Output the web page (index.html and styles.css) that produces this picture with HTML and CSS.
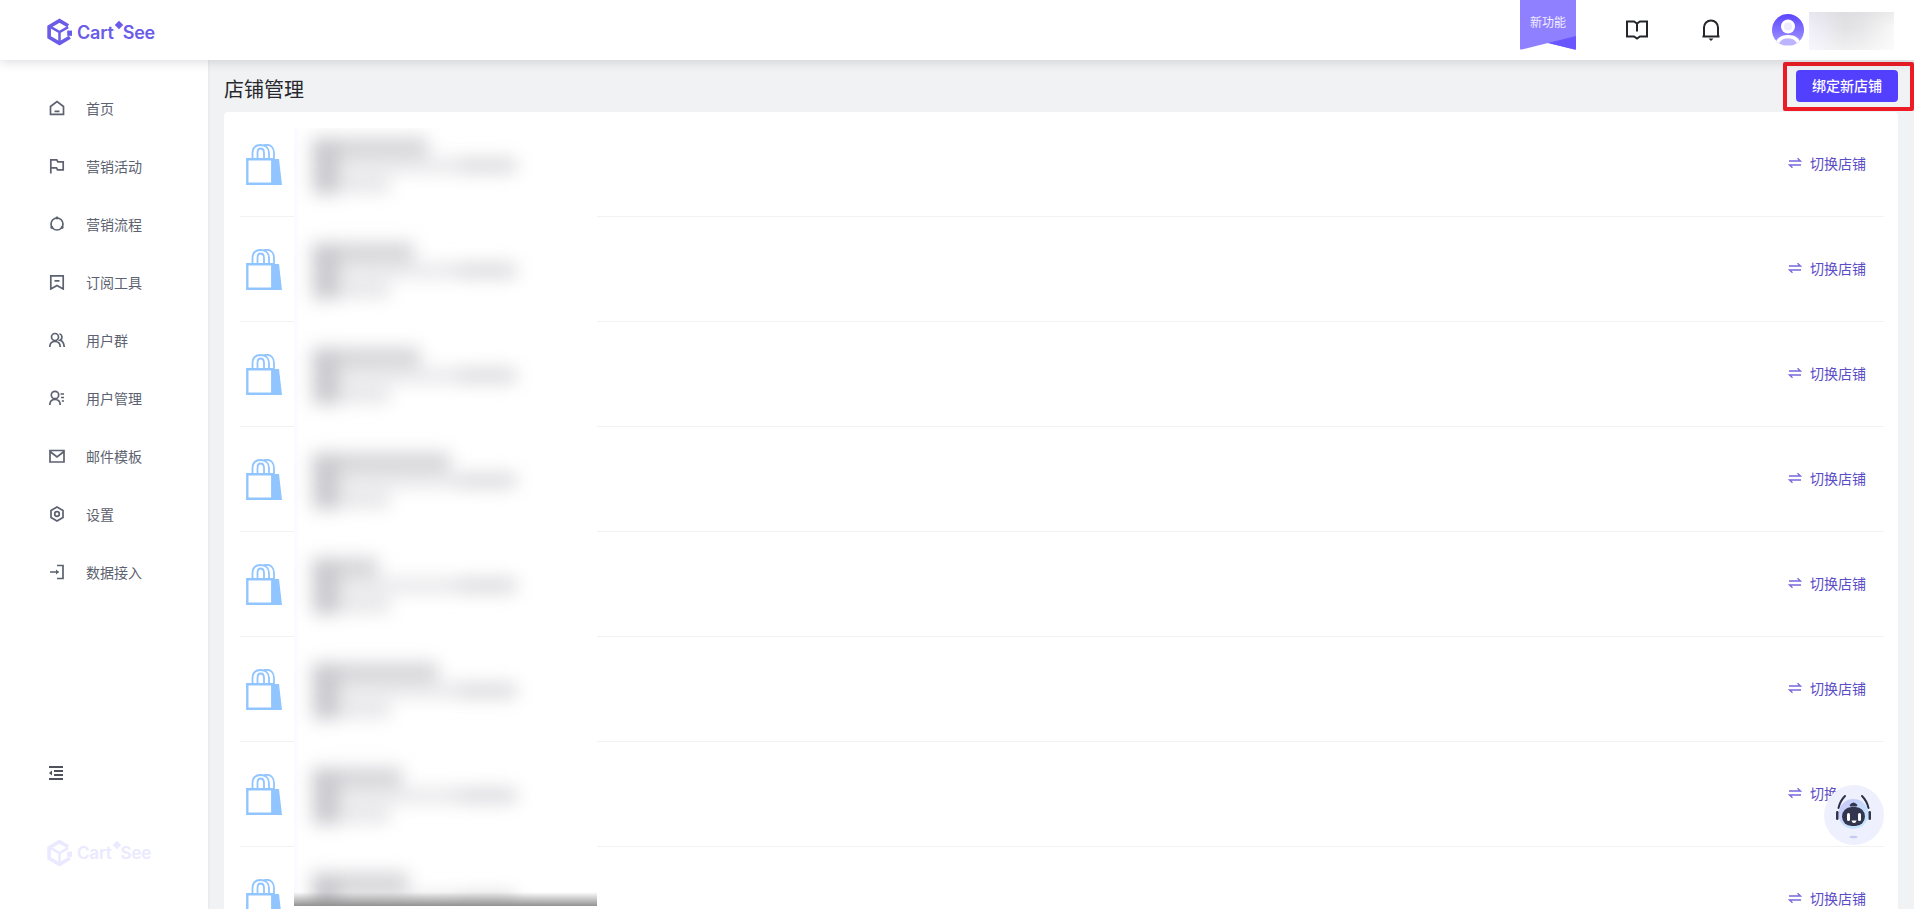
FILE: index.html
```html
<!DOCTYPE html>
<html lang="zh-CN">
<head>
<meta charset="utf-8">
<title>店铺管理</title>
<link rel="stylesheet" href="styles.css">
</head>
<body>
<svg class="defs" width="0" height="0" aria-hidden="true">
  <defs>
    <symbol id="bag" viewBox="0 0 36 41">
      <path d="M26 15h7l3 26H26z" fill="#91c5ff"/>
      <path d="M1.300 15.300h25v24.400h-25z" fill="#fff" stroke="#91c5ff" stroke-width="2.400"/>
      <path d="M6.500 15V9C6.500 4 9.500 1 14.500 1S23 4 23 9v6M11.500 15V9c0-3 1-4.500 3-4.500S18 6 18 9v6" fill="none" stroke="#91c5ff" stroke-width="1.800"/>
      <path d="M18 1.200C19 .8 20 .8 21 .8c4 0 7 3.200 7 8.200v6h-2" fill="none" stroke="#91c5ff" stroke-width="1.800"/>
    </symbol>
    <symbol id="swap" viewBox="0 0 14 12">
      <path d="M1 4h11.500L9.500 1.200M13 8H1.500l3 2.800" fill="none" stroke="#7668dc" stroke-width="1.300"/>
    </symbol>
    <symbol id="logo" viewBox="0 0 26 28">
      <path d="M22 7.500 13 2.200 2.200 8.500v11L13 25.800l10.800-6.300" fill="none" stroke="currentColor" stroke-width="3.800"/>
      <path d="M3 8.500 13 14l9-5M13 14v11" fill="none" stroke="currentColor" stroke-width="2.600"/>
      <path d="M21 12.500h5V18h-5z" fill="currentColor"/>
    </symbol>
  </defs>
</svg>

<header class="topbar">
  <a class="brand brand-top">
    <svg class="brand-mark"><use href="#logo"/></svg>
    <span class="brand-text">Cart<i class="spark"></i>See</span>
  </a>
  <div class="top-actions">
    <div class="ribbon">
      <svg class="ribbon-bg" viewBox="0 0 56 50" aria-hidden="true">
        <path d="M0 0h56v48.500q0 1.500-1.500 1L28 43 1.500 49.500Q0 50 0 48.500z" fill="#8f80ff"/>
        <path d="M28 43 56 36v12.500q0 1.500-1.500 1z" fill="#6a56ff"/>
      </svg>
      <span class="ribbon-text">新功能</span>
    </div>
    <svg class="top-icon book" viewBox="0 0 22 20" aria-hidden="true">
      <path d="M1 1.500h7l3 2 3-2h7v15h-7l-3 2-3-2H1z" fill="none" stroke="#24262b" stroke-width="2"/>
      <path d="M11 3.500v8" stroke="#24262b" stroke-width="2"/>
    </svg>
    <svg class="top-icon bell" viewBox="0 0 18 22" aria-hidden="true">
      <path d="M.5 17.500h17M2 17.500V8.500a7 7 0 0 1 14 0v9" fill="none" stroke="#24262b" stroke-width="2"/>
      <path d="M6.500 19.500h5L9 22z" fill="#24262b"/>
    </svg>
    <svg class="avatar" viewBox="0 0 32 32" aria-hidden="true">
      <defs>
        <linearGradient id="av" x1="0" y1="0" x2="0" y2="1"><stop offset="0" stop-color="#5a45ff"/><stop offset="1" stop-color="#a89cff"/></linearGradient>
        <clipPath id="avc"><circle cx="16" cy="16" r="16"/></clipPath>
      </defs>
      <circle cx="16" cy="16" r="16" fill="url(#av)"/>
      <g clip-path="url(#avc)" fill="#fff">
        <circle cx="16" cy="12.500" r="7"/>
        <path d="M3 31c1-7 6-10 13-10s12 3 13 10v2H3z"/>
      </g>
      <circle cx="16" cy="12.500" r="4" fill="#eeeaff"/>
      <path d="M7 30c1-3.500 4-5.500 9-5.500s8 2 9 5.500q-4 1.500-9 1.500T7 30z" fill="#bdb4ff" clip-path="url(#avc)"/>
    </svg>
    <div class="user-name"></div>
  </div>
</header>

<div class="layout">
  <aside class="sidebar">
    <nav class="menu">
      <a class="menu-item"><svg class="menu-icon" viewBox="0 0 16 16"><path d="M1.500 14.300V6.500L8 1.500l6.500 5v7.800zM5.500 11.300h5"/></svg>首页</a>
      <a class="menu-item"><svg class="menu-icon" viewBox="0 0 16 16"><path d="M1.800 15.500V1.800h6l1 2h5.400v8H8.500l-1-2H1.800"/></svg>营销活动</a>
      <a class="menu-item"><svg class="menu-icon" viewBox="0 0 16 16"><circle cx="8" cy="8" r="6"/><circle cx="8" cy="2" r="1.400" class="dot"/><circle cx="2.800" cy="11.500" r="1.400" class="dot"/><circle cx="13.200" cy="11.500" r="1.400" class="dot"/></svg>营销流程</a>
      <a class="menu-item"><svg class="menu-icon" viewBox="0 0 16 16"><path d="M1.800 15V1.800h12.400V15L8 11.500zM5.500 6.800h5"/></svg>订阅工具</a>
      <a class="menu-item"><svg class="menu-icon" viewBox="0 0 16 16"><circle cx="6" cy="5" r="3.500"/><path d="M.8 15c0-3.500 2.200-5.500 5.200-5.500s5.200 2 5.200 5.500M10.500 1.800a3.500 3.500 0 0 1 .5 6.500c2.500.7 4 3 4.200 6.700"/></svg>用户群</a>
      <a class="menu-item"><svg class="menu-icon" viewBox="0 0 16 16"><circle cx="6" cy="5" r="3.700"/><path d="M.8 15c0-3.500 2.200-5.500 5.200-5.500s5.200 2 5.200 5.500M11.500 4h3.500M12 7.500h3M12.800 11H15"/></svg>用户管理</a>
      <a class="menu-item"><svg class="menu-icon" viewBox="0 0 16 16"><path d="M1 2.500h14v11.500H1zM1 3.500 8 9l7-5.500"/></svg>邮件模板</a>
      <a class="menu-item"><svg class="menu-icon" viewBox="0 0 16 16"><path d="M8 1l6 3.500v7L8 15l-6-3.500v-7z"/><circle cx="8" cy="8" r="2.300"/></svg>设置</a>
      <a class="menu-item"><svg class="menu-icon" viewBox="0 0 16 16"><path d="M8 1.500h6v13H8M1 8h8.500"/><path d="M7 5.500 10 8l-3 2.500z" class="dot"/></svg>数据接入</a>
    </nav>
    <div class="side-foot">
      <svg class="collapse" viewBox="0 0 14 14" aria-hidden="true">
        <path d="M0 1h14M5 5h9M5 9h9M0 13h14" stroke="#4f525b" stroke-width="2"/>
        <path d="M3 4.500v5L0 7z" fill="#4f525b"/>
      </svg>
      <a class="brand brand-faded">
        <svg class="brand-mark"><use href="#logo"/></svg>
        <span class="brand-text">Cart<i class="spark"></i>See</span>
      </a>
    </div>
  </aside>

  <main class="main">
    <div class="page-head">
      <h1 class="page-title">店铺管理</h1>
      <div class="bind-wrap"><button class="bind-btn">绑定新店铺</button></div>
    </div>
    <section class="card">
      <div class="shop-row"><svg class="shop-bag"><use href="#bag"/></svg><a class="switch"><svg class="switch-icon"><use href="#swap"/></svg>切换店铺</a></div>
      <div class="shop-row"><svg class="shop-bag"><use href="#bag"/></svg><a class="switch"><svg class="switch-icon"><use href="#swap"/></svg>切换店铺</a></div>
      <div class="shop-row"><svg class="shop-bag"><use href="#bag"/></svg><a class="switch"><svg class="switch-icon"><use href="#swap"/></svg>切换店铺</a></div>
      <div class="shop-row"><svg class="shop-bag"><use href="#bag"/></svg><a class="switch"><svg class="switch-icon"><use href="#swap"/></svg>切换店铺</a></div>
      <div class="shop-row"><svg class="shop-bag"><use href="#bag"/></svg><a class="switch"><svg class="switch-icon"><use href="#swap"/></svg>切换店铺</a></div>
      <div class="shop-row"><svg class="shop-bag"><use href="#bag"/></svg><a class="switch"><svg class="switch-icon"><use href="#swap"/></svg>切换店铺</a></div>
      <div class="shop-row"><svg class="shop-bag"><use href="#bag"/></svg><a class="switch"><svg class="switch-icon"><use href="#swap"/></svg>切换店铺</a></div>
      <div class="shop-row"><svg class="shop-bag"><use href="#bag"/></svg><a class="switch"><svg class="switch-icon"><use href="#swap"/></svg>切换店铺</a></div>
      <div class="redaction" aria-hidden="true">
        <div class="smear s1"><b></b><u></u><s></s></div>
        <div class="smear s2"><b></b><u></u><s></s></div>
        <div class="smear s3"><b></b><u></u><s></s></div>
        <div class="smear s4"><b></b><u></u><s></s></div>
        <div class="smear s5"><b></b><u></u><s></s></div>
        <div class="smear s6"><b></b><u></u><s></s></div>
        <div class="smear s7"><b></b><u></u><s></s></div>
        <div class="smear s8"><b></b><u></u><s></s></div>
      </div>
    </section>
  </main>
</div>

<div class="bot">
  <svg viewBox="0 0 60 60" aria-hidden="true">
    <defs>
      <linearGradient id="head" x1="0" y1="0" x2="1" y2="1"><stop offset="0" stop-color="#c9c6f7"/><stop offset="1" stop-color="#c4ecff"/></linearGradient>
    </defs>
    <circle cx="30" cy="30" r="30" fill="#eef1fd"/>
    <path d="M14.500 23q1.500-7 6.500-12M44.500 23q-1.500-7-6.500-12" fill="none" stroke="#2c2f45" stroke-width="2" stroke-linecap="round"/>
    <circle cx="29.500" cy="29" r="15" fill="url(#head)"/>
    <path d="M25.500 20q4-5 8 0l-1 1.500h-6z" fill="#34364f"/>
    <rect x="18" y="22" width="23" height="19" rx="9.500" fill="#34364f"/>
    <rect x="12" y="26" width="2.500" height="9" rx="1.200" fill="#34364f"/>
    <rect x="44.500" y="26" width="2.500" height="9" rx="1.200" fill="#34364f"/>
    <rect x="23" y="28" width="3" height="8" rx="1.500" fill="#fff"/>
    <rect x="34" y="28" width="3" height="8" rx="1.500" fill="#fff"/>
    <path d="M27.500 35.500h5q-.5 2.500-2.500 2.500t-2.500-2.500z" fill="#fff"/>
    <ellipse cx="29.500" cy="52" rx="4" ry="1.200" fill="#c5caf0"/>
  </svg>
</div>
</body>
</html>
```
FILE: styles.css
```css
* { box-sizing: border-box; }

html, body { height: 100%; }

body {
  margin: 0;
  overflow: hidden;
  display: flex;
  flex-direction: column;
  background: #f1f2f4;
  color: #222;
  font-family: "Noto Sans CJK SC", "Noto Sans", sans-serif;
  font-size: 14px;
}

.defs { position: absolute; }

/* top bar */
.topbar {
  position: relative;
  z-index: 2;
  flex: 0 0 60px;
  display: flex;
  align-items: center;
  justify-content: space-between;
  padding: 0 20px 0 47px;
  background: #fff;
  box-shadow: 0 2px 10px rgba(40, 44, 60, .16);
}

.brand {
  display: flex;
  align-items: center;
  gap: 5px;
  color: #6a5ce8;
}

.brand-top { margin-top: 4px; }
.brand-top .brand-text { padding-top: 2px; }

.brand-mark { width: 25px; height: 28px; }

.brand-text {
  display: block;
  font-family: Inter, "Noto Sans", sans-serif;
  font-size: 18px;
  font-weight: 600;
  line-height: 28px;
  letter-spacing: -.2px;
}

.spark {
  display: inline-block;
  width: 6px;
  height: 6px;
  margin: 0 1px 11px 2px;
  background: currentColor;
  transform: rotate(45deg);
}

.top-actions {
  display: flex;
  align-items: center;
  height: 60px;
}

.ribbon {
  position: relative;
  align-self: flex-start;
  width: 56px;
  height: 50px;
  margin-right: 50px;
}

.ribbon-bg { display: block; width: 56px; height: 50px; }

.ribbon-text {
  position: absolute;
  left: 0;
  right: 0;
  top: 13px;
  text-align: center;
  color: #f1eeff;
  font-size: 12px;
  line-height: 18px;
}

.top-icon { display: block; }
.book { width: 22px; height: 20px; margin-right: 54px; }
.bell { width: 18px; height: 22px; margin-right: 52px; }
.avatar { width: 32px; height: 32px; margin-right: 5px; }

.user-name {
  width: 85px;
  height: 38px;
  margin-top: 2px;
  background:
    linear-gradient(rgba(214, 214, 216, .35), rgba(255, 255, 255, 0) 40%, rgba(255, 255, 255, .5)),
    linear-gradient(90deg, #f0effb, #e2e2e4 42%, #e6e6e8 62%, #f8f8f8);
}

/* layout */
.layout {
  flex: 1;
  display: flex;
  min-height: 0;
}

.sidebar {
  flex: 0 0 208px;
  display: flex;
  flex-direction: column;
  padding-top: 19px;
  background: #fff;
  box-shadow: 1px 0 2px rgba(40, 44, 60, .05);
}

.menu-item {
  display: flex;
  align-items: center;
  gap: 21px;
  height: 58px;
  padding-left: 49px;
  color: #5c6270;
  font-size: 14px;
}

.menu-icon {
  flex: none;
  width: 16px;
  height: 16px;
  fill: none;
  stroke: #5c6270;
  stroke-width: 1.700;
}

.menu-icon .dot { fill: #5c6270; stroke: none; }

.side-foot {
  margin-top: auto;
  display: flex;
  flex-direction: column;
  padding: 0 0 42px 49px;
}

.collapse { display: block; width: 14px; height: 14px; margin-bottom: 59px; }

.brand-faded { margin-left: -2px; color: #ebe9ff; }
.brand-faded .brand-text { font-size: 17px; }

/* main */
.main {
  flex: 1;
  min-width: 0;
  display: flex;
  flex-direction: column;
  padding: 0 16px;
}

.page-head {
  flex: 0 0 52px;
  display: flex;
  align-items: center;
  justify-content: space-between;
}

.page-title {
  margin: 6px 0 0;
  font-size: 20px;
  font-weight: 400;
  line-height: 28px;
  color: #26282d;
}

.bind-wrap { position: relative; }

.bind-wrap::after {
  content: "";
  position: absolute;
  inset: -8px -16px -9px -13px;
  border: 4px solid #ed1c24;
  border-radius: 2px;
  pointer-events: none;
}

.bind-btn {
  display: block;
  width: 102px;
  height: 32px;
  padding: 0 0 2px;
  border: 0;
  border-radius: 4px;
  background: #5340ff;
  color: #fff;
  font: 500 14px "Noto Sans CJK SC", sans-serif;
}

.card {
  position: relative;
  flex: 1;
  min-height: 0;
  overflow: hidden;
  padding: 0 14px 0 16px;
  border-radius: 4px 4px 0 0;
  background: #fff;
}

.shop-row {
  display: flex;
  align-items: center;
  justify-content: space-between;
  height: 105px;
  padding: 0 18px 0 6px;
  border-bottom: 1px solid #f1f2f4;
}

.shop-bag { display: block; width: 36px; height: 41px; flex: none; }

.switch {
  display: flex;
  align-items: center;
  gap: 8px;
  padding-bottom: 2px;
  color: #5a4dc6;
  font-size: 14px;
  line-height: 20px;
}

.switch-icon { width: 14px; height: 12px; }

/* blurred-out shop details */
.redaction {
  position: absolute;
  left: 70px;
  top: 16px;
  width: 303px;
  height: 778px;
  overflow: hidden;
  background: linear-gradient(90deg, #fafbff, #fff 6px);
  display: flex;
  flex-direction: column;
}

.redaction::after {
  content: "";
  position: absolute;
  left: 0;
  right: 0;
  bottom: 0;
  height: 14px;
  background: linear-gradient(rgba(130, 130, 130, 0), #929292);
}

.smear {
  position: relative;
  flex: 0 0 105px;
  display: flex;
  flex-direction: column;
  padding: 10px 0 0 18px;
  filter: blur(9px);
}

.smear::before {
  content: "";
  position: absolute;
  left: 20px;
  top: 12px;
  width: 24px;
  height: 54px;
  background: #c8c8cd;
}

.smear b, .smear u, .smear s { display: block; }
.smear b { height: 18px; width: var(--w); background: #d2d2d6; }
.smear u {
  height: 13px;
  width: 204px;
  margin-top: 3px;
  background: linear-gradient(90deg, #e4e4e7 68%, #d4d4d8 76%);
}
.smear s { height: 14px; width: 78px; margin-top: 6px; background: #e2e2e5; }

.s1 { --w: 116px; }
.s2 { --w: 102px; }
.s3 { --w: 108px; }
.s4 { --w: 138px; }
.s5 { --w: 66px; }
.s6 { --w: 126px; }
.s7 { --w: 90px; }
.s8 { --w: 96px; }

/* chat robot */
.bot {
  position: absolute;
  right: 30px;
  bottom: 64px;
  width: 60px;
  height: 60px;
  z-index: 3;
}

.bot svg { display: block; width: 60px; height: 60px; }
```
